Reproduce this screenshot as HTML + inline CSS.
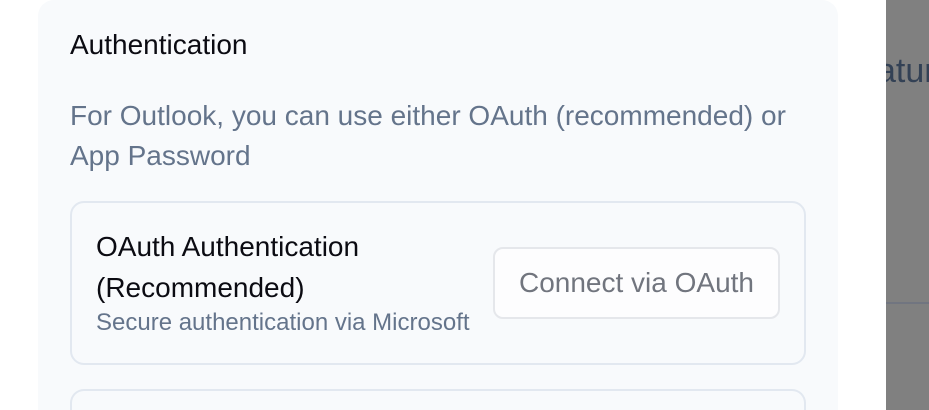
<!DOCTYPE html>
<html><head><meta charset="utf-8"><style>
*{margin:0;padding:0;box-sizing:border-box}
html,body{width:929px;height:410px;overflow:hidden}
body{background:#fff;font-family:"Liberation Sans",Arial,sans-serif;position:relative}
.overlay{position:absolute;left:886px;top:0;width:43px;height:410px;background:#808080;overflow:hidden}
.overlay .t{position:absolute;left:-9px;top:52px;font-size:34px;color:#334155;white-space:nowrap}
.overlay .l{position:absolute;left:0;top:302px;width:43px;height:2px;background:#717580}
.panel{position:absolute;left:38px;top:0;width:800px;height:410px;background:#f8fafc;border-radius:16px 16px 0 0}
.h{position:absolute;left:70px;top:29px;font-size:28px;color:#0b0b12}
.d{position:absolute;left:70px;top:96px;width:730px;font-size:28px;line-height:40px;color:#64748b}
.card{position:absolute;left:70px;top:201px;width:736px;height:164px;border:2px solid #e2e8f0;border-radius:14px}
.card2{position:absolute;left:70px;top:389px;width:736px;height:21px;border:2px solid #e2e8f0;border-bottom:none;border-radius:14px 14px 0 0}
.ct{position:absolute;left:96px;top:226px;font-size:28px;line-height:41px;color:#0b0b12}
.cs{position:absolute;left:96px;top:309px;font-size:24px;color:#64748b}
.btn{position:absolute;left:493px;top:247px;width:287px;height:72px;background:#fdfdfe;border:2px solid #e5e7eb;border-radius:10px;font-size:28px;color:#71757e;display:flex;align-items:center;justify-content:center}
</style></head><body>
<div class="panel"></div>
<div class="h">Authentication</div>
<div class="d">For Outlook, you can use either OAuth (recommended) or App Password</div>
<div class="card"></div>
<div class="ct">OAuth Authentication<br>(Recommended)</div>
<div class="cs">Secure authentication via Microsoft</div>
<div class="btn">Connect via OAuth</div>
<div class="card2"></div>
<div class="overlay"><div class="t">atur</div><div class="l"></div></div>
</body></html>
